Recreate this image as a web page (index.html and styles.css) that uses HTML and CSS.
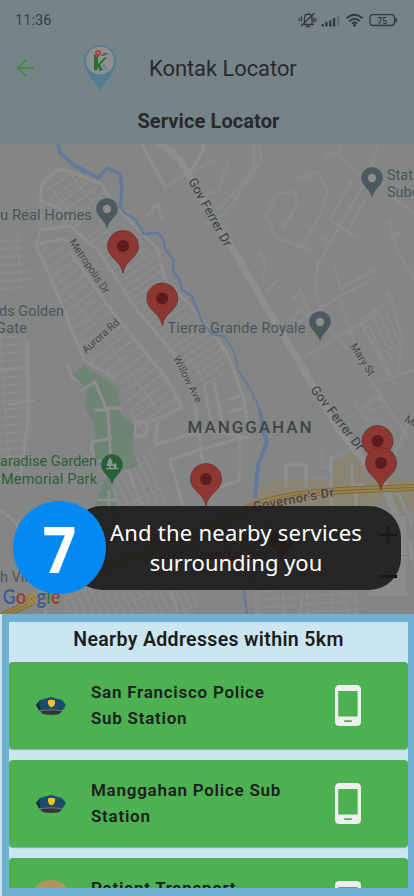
FILE: index.html
```html
<!DOCTYPE html>
<html lang="en">
<head>
<meta charset="utf-8">
<title>Kontak Locator</title>
<link rel="stylesheet" href="styles.css">
</head>
<body>
<div class="screen">
  <header class="header">
    <div class="status">
      <span class="clock">11:36</span>
      <svg class="status-icons" viewBox="297 10 102 20" width="102" height="20">
        <g fill="none" stroke="#34393b" stroke-width="1.3" stroke-linecap="round">
          <path d="M303 24.5h10.500M304.500 24v-6q0-3.500 4-4q3.500.5 3.500 4v6M306.500 26.500h3M301.500 25.500L314 13.500"/>
          <path d="M301.300 17v4M299 18.500v2M313.800 18v4M315.700 19v2"/>
          <path stroke-width="1.900" d="M346.500 18.300Q354.500 11 362.500 18.300M349.300 21Q354.500 16.300 359.700 21M351.900 23.600Q354.500 21.500 357.100 23.600" stroke-linecap="butt"/>
          <rect x="370" y="14.700" width="24.500" height="10.800" rx="3"/>
        </g>
        <g fill="#34393b"><path d="M321.500 24h2.300v2.500h-2.300zM325.300 22h2.300v4.500h-2.300zM329.100 20.500h2.300v6h-2.300zM332.900 18h2.300v8.500h-2.300zM395.300 18.300h1.800v4h-1.800z"/><circle cx="354.500" cy="25.500" r="1.400"/><path opacity=".3" d="M336.900 15.500h2.500v11h-2.500z"/></g>
        <text x="382.300" y="23.500" text-anchor="middle" class="battery">75</text>
      </svg>
    </div>
    <div class="appbar">
      <svg class="back" viewBox="0 0 20 20" width="20" height="20"><path d="M18 10H2M10 1.800L1.800 10l8.200 8.200" fill="none" stroke="#438a48" stroke-width="2"/></svg>
      <svg class="logo" viewBox="0 0 34 48" width="34" height="48">
        <path d="M17 47C13 38 1 29 1 17a16 16 0 0 1 32 0C33 29 21 38 17 47z" fill="#537c90"/>
        <circle cx="17" cy="16.500" r="14" fill="#8c9090"/>
        <path d="M11 10l4 3v7l6-6 3-1-7 8 3 5-3 1-2-4-1 3h-3z" fill="#286c32"/>
        <path d="M19 21l3-1 3 6h-3z" fill="#63899b"/><path d="M18 12q2-4 7-3-1 3-7 3z" fill="#555c5c"/>
        <path d="M15 14c-1-3-3-3-3-5a3 3 0 0 1 6 0c0 2-2 2-3 5z" fill="#a43c44"/><circle cx="15" cy="9" r="1.100" fill="#8c9090"/>
      </svg>
      <h1 class="title">Kontak Locator</h1>
    </div>
    <h2 class="subtitle">Service Locator</h2>
  </header>

  <main class="map-wrap">
    <svg class="map" viewBox="0 144 414 470" width="414" height="470">
      <defs>
        <pattern id="hatchA" width="9" height="24" patternUnits="userSpaceOnUse" patternTransform="rotate(53)"><path d="M0 0V24M0 0H9" class="street"/></pattern>
        <pattern id="hatchB" width="7" height="36" patternUnits="userSpaceOnUse" patternTransform="rotate(57)"><path d="M0 0V36M0 0H7" class="street"/></pattern>
        <pattern id="hatchC" width="24" height="8" patternUnits="userSpaceOnUse" patternTransform="rotate(-4)"><path d="M0 0H24M0 0V8" class="street"/></pattern>
        <pattern id="hatchD" width="7" height="30" patternUnits="userSpaceOnUse" patternTransform="rotate(-25)"><path d="M0 0V30M0 0H7" class="street"/></pattern>
        <pattern id="hatchE" width="4" height="50" patternUnits="userSpaceOnUse"><path d="M0 0V50" class="street dim"/></pattern>
        <g id="pin">
          <path d="M0 27C-2 14-15.500 12-15.500 0a15.500 15.500 0 0 1 31 0C15.500 12 2 14 0 27z" fill="#8d3732" stroke="#702d2a" stroke-width=".8"/>
          <circle r="6" fill="#5b1d1d"/>
        </g>
        <g id="place">
          <path d="M0 20C-2 10-10.800 8-10.800 0a10.800 10.800 0 0 1 21.600 0C10.800 8 2 10 0 20z" fill="#4c5a60"/>
        </g>
      </defs>
      <rect y="144" width="414" height="470" fill="#848685"/>

      <g>
        <path d="M44 177L62 167L96 182L110 205L72 232L40 230L38 200z" fill="url(#hatchA)"/>
        <path d="M84 232L108 215L155 250L165 285L205 320L228 350L222 378L205 385L170 345L122 290z" fill="url(#hatchB)"/>
        <path d="M36 246L64 246L108 305L160 370L190 402L150 405L110 378L84 362L60 307z" fill="url(#hatchA)"/>
        <path d="M0 234L22 232L24 262L36 286L0 290z" fill="url(#hatchC)"/>
        <path d="M0 335L26 335L34 420L20 480L0 482z" fill="url(#hatchC)"/>
        <path d="M119 380L150 385L180 408L150 435L140 440z" fill="url(#hatchA)"/>
        <path d="M122 465L150 450L182 530L200 614L60 614L75 565z" fill="url(#hatchD)"/>
        <path d="M206 144H310L300 164L270 178L250 180L230 248L214 190z" fill="url(#hatchE)"/>
        <path d="M231 205L250 195L258 240L248 250z" fill="url(#hatchE)"/>
        <path d="M361 330L386 310L402 340L392 376z" fill="url(#hatchD)"/>
        <path d="M293 340L340 350L360 395L335 385z" fill="url(#hatchE)"/>
        <path d="M255 575L275 545H330L370 614H255z" fill="url(#hatchC)"/>
        <path d="M85 144H110V165H90z" fill="url(#hatchE)"/>
      </g>
      <g class="road">
        <path d="M40 226V200Q38 178 62 169L100 183L114 204L158 250L164 278L192 307L218 340L230 360L244 400L250 435"/>
        <path d="M39 230L70 226L98 250L133 305L172 352Q196 382 200 446"/>
        <path d="M40 230L36 246L58 295L78 345L84 360L114 378M69 250L108 306L168 380L182 408L150 422M39 200L60 208L66 226"/>
        <path d="M36 245L62 239L76 244M204 386L214 435M214 382L224 430M226 400L240 396M228 412L244 408"/>
        <path d="M142 144L165 187L192 170L204 148L202 144M147 216L158 204L162 220"/>
        <path d="M8 405L35 400M0 370L30 367M28 340V420L20 480M0 510Q18 520 30 550L46 614"/>
        <path d="M68 364L72 378L90 384L108 420L112 480M110 455L126 463L144 514L178 612M92 442L90 462L110 470"/>
        <path d="M155 445L205 430L250 438M158 420L155 445M170 460L200 450L240 438V480L210 490M170 460L190 530M200 446L210 500"/>
        <path d="M135 422H147V436H135z"/>
      </g>
      <g class="road faint">
        <path d="M165 187L214 160M254 144V172L224 214L204 225M204 196L218 190L228 160"/>
        <path d="M341 144L340 158L366 180L318 264L315 290L328 328L348 350M324 155L340 152M352 180L330 220L358 238M348 231L366 198M372 165L378 144"/>
        <path d="M298 180L317 172L328 190L320 215L302 246L276 238L266 215L276 194L295 192L297 205L283 228M276 238L314 251M320 237L333 243"/>
        <path d="M334 262L340 289L374 270M295 325L333 300L374 278M303 358L382 311M340 300L364 370L408 438M326 330L300 310L292 320M387 292L392 300L360 320M360 320L395 386M392 300L402 340L398 374M293 300L300 290L310 315"/>
        <path d="M258 144L262 160L240 186L218 210M260 252L266 265L262 280M278 280L266 292M389 220L395 245L414 280M389 238L402 232M394 198L414 213M378 382L414 370"/>
        <path d="M286 478V464H306V490M307 478H328M322 448V468H334V490M330 460L362 445M354 402L366 420L382 420M364 408L376 396L386 404L370 412M412 415L390 465"/>
        <path d="M290 500L310 530L300 614M256 614V585L290 570L340 590L350 614M310 545L340 535L365 555"/>
      </g>
      <path d="M72 374L84 366L119 388L120 413L134 425L132 450L138 466L124 470L118 462L106 460L114 500L124 535L94 535L95 505L107 475L90 455L96 440L94 425L84 405L88 390z" fill="#6f8475"/>
      <path class="road" d="M80 391L95 382L106 408H122M94 410H108L112 480M92 442L112 438M92 442L94 462L106 460M98 500H118M109 490V530"/>
      <path d="M256 491L278 479L333 480V460H345L350 449H360L364 478L414 480V508L402 514L390 500L375 502L372 515H300L290 505L250 510z" fill="#8a8573"/>
      <g class="road"><path d="M331 455V515M352 463V485H364M356 490V520M286 488V465H306V488M395 486L412 524"/></g>
      <path class="major" d="M155 139L180 160L207 206L245 270L301 365L339 430L362 458L384 484L414 560"/>
      <g class="water">
        <path stroke-width="3.5" d="M58 144L60 153L73 164L87 172L98 178L107 168L120 174L122 188L120 209"/>
        <path stroke-width="2.4" d="M120 207L125 213L135 219L144 234L158 233L164 241L165 249L174 260L173 271L180 281L182 290L192 296L202 322L212 334L226 337"/>
        <path stroke-width="1.7" d="M225 337L234 352L238 370L251 390L260 410"/>
        <path stroke-width="4" d="M260 410L263 430L267 442L258 465L255 498M72 165L87 172"/>
        <path stroke-width="2.500" d="M258 500L266 518L267 545L255 570L244 592L247 614"/>
      </g>
      <g fill="none"><path d="M0 617L36 600L60 589L105 567L150 552L205 530L254 505Q290 493 350 490L414 487.500" stroke="#75633b" stroke-width="7"/><path d="M0 617L36 600L60 589L105 567L150 552L205 530L254 505Q290 493 350 490L414 487.500" stroke="#9a8048" stroke-width="5.500"/><path d="M0 617L36 600L60 589L105 567L150 552L205 530L254 505Q290 493 350 490L414 487.500" stroke="#7c693d" stroke-width="1"/></g>

      <g class="label">
        <text x="0" y="220" textLength="92" lengthAdjust="spacingAndGlyphs">u Real Homes</text>
        <text x="-1" y="316" textLength="65">ds Golden</text>
        <text x="-4" y="333" textLength="31">Gate</text>
        <text x="167.500" y="333" textLength="138">Tierra Grande Royale</text>
        <text x="387" y="179.500">Station</text>
        <text x="387" y="197">Subdivision</text>
        <text x="0" y="582">h Village</text>
      </g>
      <g class="label green"><text x="-9" y="466" textLength="106">Paradise Garden</text><text x="1" y="484" textLength="96">Memorial Park</text></g>
      <g class="roadname">
        <text transform="translate(69 242) rotate(56)" textLength="63">Metropolis Dr</text>
        <text transform="translate(86 354) rotate(-42)" textLength="46">Aurora Rd</text>
        <text transform="translate(173 358) rotate(63)" textLength="51">Willow Ave</text>
        <text transform="translate(350 346) rotate(58)" textLength="36">Mary St</text>
        <text transform="translate(404 421) rotate(32)">Main</text>
      </g>
      <g class="highway">
        <text transform="translate(188 181) rotate(61)" textLength="76">Gov Ferrer Dr</text>
        <text transform="translate(310 390) rotate(52)" textLength="78">Gov Ferrer Dr</text>
        <text class="brown" transform="translate(254 511) rotate(-10.500)" textLength="82">Governor's Dr</text>
      </g>
      <text class="district" x="187.500" y="433" textLength="124">MANGGAHAN</text>

      <use href="#place" x="107" y="209"/><circle cx="107" cy="209" r="4.200" fill="#8c8e8d"/>
      <use href="#place" x="320" y="322"/><circle cx="320" cy="322" r="4.200" fill="#8c8e8d"/>
      <use href="#place" x="372" y="178"/><circle cx="372" cy="178" r="4.200" fill="#8c8e8d"/>
      <path transform="translate(112 465)" d="M0 20C-2 10-10.800 8-10.800 0a10.800 10.800 0 0 1 21.600 0C10.800 8 2 10 0 20z" fill="#2a6038"/>
      <path d="M110 457.500l-3 4.500h1.300l-2.300 4h3.300v2h-3v1.200h12v-1.200h-2v-2q1-2-1.300-3-2 1-1.300 3v2h-3v-2h3.300l-2.300-4h1.300z" fill="#8b9a90"/>
      <use href="#pin" x="123" y="246"/>
      <use href="#pin" x="162.300" y="298.500"/>
      <use href="#pin" x="206" y="479"/>
      <use href="#pin" x="377.500" y="441"/>
      <use href="#pin" x="381" y="463"/>
      <g class="clinic"><text x="123" y="542" textLength="140">Gentri Medical Center</text><text x="158" y="560" textLength="109">And Hospital Inc</text></g>
      <use href="#pin" transform="translate(281.500 541) scale(.7)"/>
      <rect x="368" y="515" width="40" height="82" fill="#8b8b8b" stroke="#7b7d7c" stroke-width=".6"/>
      <path d="M369 555.500H408" stroke="#7b7d7c"/>
      <path d="M379 535H397M388 526V544M379 576.500H397" stroke="#050505" stroke-width="3"/>
      <g class="google"><text x="2.500" y="604" textLength="58" lengthAdjust="spacingAndGlyphs"><tspan fill="#405c97">G</tspan><tspan fill="#963f38">o</tspan><tspan fill="#a5821a">o</tspan><tspan fill="#405c97">g</tspan><tspan fill="#37784a">l</tspan><tspan fill="#963f38">e</tspan></text></g>
    </svg>
    <div class="callout">
      <p><span class="first">And the nearby services</span><br>surrounding you</p>
    </div>
    <div class="step"><span class="digit">7</span></div>
  </main>

  <section class="panel">
    <h3>Nearby Addresses within 5km</h3>
    <div class="card">
      <svg class="cap" viewBox="0 0 30 18" width="30" height="18"><path d="M0 8L4 3 15 0 26 3 30 8 26 14H4z" fill="#1b4c70"/><path d="M0 8L4 3.500 3 7 5 14 3 13z" fill="#14252d"/><path d="M4 13q11-2 22 0-1 4-5 4.500-6 .8-12 0Q5 17 4 13z" fill="#333638"/><path d="M4 13.500q11-1.500 22 0" stroke="#77777a" fill="none"/><path d="M12 3.500q3-1.500 7 0v3q-.5 3-3.500 4-3-1-3.500-4z" fill="#fbc21c"/></svg>
      <p>San Francisco Police<br>Sub Station</p>
      <svg class="phone" viewBox="0 0 26 41" width="26" height="41"><path fill="#eee" fill-rule="evenodd" d="M4.500 0h17Q26 0 26 4.500v32Q26 41 21.500 41h-17Q0 41 0 36.500v-32Q0 0 4.500 0zM3.200 6v25.500h19.400V6zM9.200 35.300v1.600h7.600v-1.600z"/></svg>
    </div>
    <div class="card">
      <svg class="cap" viewBox="0 0 30 18" width="30" height="18"><path d="M0 8L4 3 15 0 26 3 30 8 26 14H4z" fill="#1b4c70"/><path d="M0 8L4 3.500 3 7 5 14 3 13z" fill="#14252d"/><path d="M4 13q11-2 22 0-1 4-5 4.500-6 .8-12 0Q5 17 4 13z" fill="#333638"/><path d="M4 13.500q11-1.500 22 0" stroke="#77777a" fill="none"/><path d="M12 3.500q3-1.500 7 0v3q-.5 3-3.500 4-3-1-3.500-4z" fill="#fbc21c"/></svg>
      <p>Manggahan Police Sub<br>Station</p>
      <svg class="phone" viewBox="0 0 26 41" width="26" height="41"><path fill="#eee" fill-rule="evenodd" d="M4.500 0h17Q26 0 26 4.500v32Q26 41 21.500 41h-17Q0 41 0 36.500v-32Q0 0 4.500 0zM3.200 6v25.500h19.400V6zM9.200 35.300v1.600h7.600v-1.600z"/></svg>
    </div>
    <div class="card">
      <svg class="avatar" viewBox="0 0 42 42" width="42" height="42"><circle cx="21" cy="21" r="21" fill="#b3945e"/></svg>
      <p>Patient Transport</p>
      <svg class="phone" viewBox="0 0 26 41" width="26" height="41"><path fill="#eee" fill-rule="evenodd" d="M4.500 0h17Q26 0 26 4.500v32Q26 41 21.500 41h-17Q0 41 0 36.500v-32Q0 0 4.500 0zM3.200 6v25.500h19.400V6zM9.200 35.300v1.600h7.600v-1.600z"/></svg>
    </div>
  </section>
</div>
</body>
</html>
```
FILE: styles.css
```css
* { box-sizing: border-box; margin: 0; padding: 0; }
body { font-family: Roboto, "Liberation Sans", sans-serif; color: #1b1d20; }
.screen { width: 414px; height: 896px; overflow: hidden; background: #cbe6f1; }
svg { display: block; flex: none; }

.header { height: 144px; background: #76848a; color: #27292c; }
.status { display: flex; justify-content: space-between; align-items: center; height: 40px; padding: 0 15px; }
.clock { font-size: 14.500px; font-weight: 400; letter-spacing: .1px; color: #353c3f; }
.battery { font-size: 8.500px; font-weight: 600; fill: #34393b; }
.appbar { display: flex; align-items: center; height: 56px; padding-left: 15px; }
.back { margin-left: 1px; }
.logo { margin-left: 47px; }
.title { margin-left: 32px; font-size: 22px; font-weight: 400; line-height: 57px; letter-spacing: -.08px; }
.subtitle { font-size: 20px; font-weight: 700; line-height: 24px; text-align: center; padding-top: 13px; padding-left: 3px; letter-spacing: .1px; }

.map-wrap { position: relative; height: 470px; }
.street { fill: none; stroke: #8e8e8f; stroke-width: 2.200; }
.street.dim { stroke: #898a8a; stroke-width: 1; }
.road { fill: none; stroke: #8e8e8f; stroke-width: 3; stroke-linejoin: round; }
.road.faint { stroke: #8a8b8b; }
.major { fill: none; stroke: #8f8e8e; stroke-width: 7; stroke-linejoin: round; }
.water { fill: none; stroke: #64789a; stroke-linejoin: round; }
.label { font-size: 14.500px; fill: #48545b; }
.label.green { fill: #2a5e39; }
.label text { stroke: #868887; stroke-width: 1.500px; paint-order: stroke; }
.roadname { font-size: 10.500px; fill: #454648; font-weight: 400; }
.highway { font-size: 12.800px; fill: #3b3c3f; font-weight: 400; }
.roadname text, .highway text { stroke: #878988; stroke-width: 1.500px; paint-order: stroke; }
.highway .brown { fill: #583a29; font-weight: 500; }
.district { font-size: 17px; font-weight: 500; fill: #3f4347; }
.clinic { font-size: 14.500px; fill: #7d2020; }
.google { font-family: Lato, sans-serif; font-size: 21px; font-weight: 700; }
.google text { stroke: #8b8d8c; stroke-width: 2px; paint-order: stroke; }

.callout { position: absolute; left: 70px; top: 362px; width: 331px; height: 84px; padding: 11px 0 0 1px; border-radius: 32px; background: rgba(28, 28, 28, .91); color: #fff; font-family: "Noto Sans", sans-serif; font-size: 22px; line-height: 30px; text-align: center; white-space: nowrap; }
.first { letter-spacing: .25px; }
.step { position: absolute; left: 13px; top: 357px; width: 93px; height: 93px; border-radius: 50%; background: #0489f3; color: #fff; font-family: "Open Sans", sans-serif; font-size: 65px; font-weight: 700; line-height: 94px; text-align: center; }
.digit { display: inline-block; transform: scaleX(.9); }

.panel { height: 282px; margin-left: 2px; border: solid #70b1d2; border-width: 8px 6.500px 8px 7px; background: #cbe6f1; overflow: hidden; }
.panel h3 { height: 40px; font-size: 19.500px; font-weight: 600; line-height: 35px; text-align: center; letter-spacing: .35px; }
.card { display: flex; align-items: flex-start; height: 87px; margin-bottom: 11px; padding-top: 17px; border-radius: 4px; background: #4db051; box-shadow: 0 1px 1px rgba(50, 130, 70, .5); }
.card p { width: 244px; font-size: 17px; font-weight: 600; line-height: 26px; letter-spacing: .74px; white-space: nowrap; }
.cap { margin: 18px 25px 0 27px; }
.avatar { margin: 5px 19px 0 21px; }
.phone { margin-top: 6px; }
```
